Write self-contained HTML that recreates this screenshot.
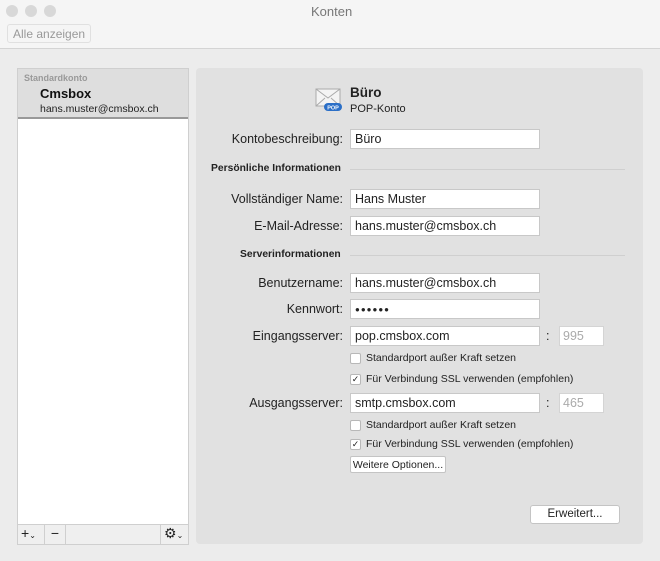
<!DOCTYPE html>
<html><head><meta charset="utf-8"><style>
*{box-sizing:border-box;margin:0;padding:0}
body{width:660px;height:561px;background:#ececec;font-family:"Liberation Sans",sans-serif;font-size:12.5px;color:#222;position:relative;overflow:hidden}
.a{position:absolute;white-space:nowrap}
.top{left:0;top:0;width:660px;height:49px;background:#f5f5f5;border-bottom:1px solid #d4d4d4}
.dot{width:12px;height:12px;border-radius:6px;background:#d8d8d8;top:5px}
.lbl{right:317px;text-align:right}
.in{left:350px;width:190px;height:20px;background:#fff;border:1px solid #c8c8c8;padding:2px 4px;font-size:12.5px}
.port{left:559px;width:45px;height:20px;background:#fff;border:1px solid #d4d4d4;color:#aaa;padding:2px 3px}
.cb{left:350px;width:11px;height:11px;background:#fff;border:1px solid #b8b8b8;border-radius:2px;font-size:9px;line-height:9px;text-align:center}
.ct{left:366px;font-size:10.5px}
.sec{font-weight:bold;font-size:10.3px}
.line{height:1px;background:#cfcfcf}
.btn{background:#fff;border:1px solid #c4c4c4;border-radius:3px;text-align:center;font-size:11.5px}
</style></head><body>
<div class="a top"></div>
<div class="a dot" style="left:6px"></div><div class="a dot" style="left:25px"></div><div class="a dot" style="left:44px"></div>
<div class="a" style="left:311px;top:4px;color:#777;font-size:13px">Konten</div>
<div class="a" style="left:7px;top:24px;width:84px;height:19px;border:1px solid #e0e0e0;border-radius:3px;color:#999;font-size:12px;padding:2px 5px">Alle anzeigen</div>

<div class="a" style="left:17px;top:68px;width:172px;height:477px;background:#fff;border:1px solid #cfcfcf"></div>
<div class="a" style="left:18px;top:69px;width:170px;height:50px;background:#dedede;border-bottom:2px solid #999"></div>
<div class="a" style="left:24px;top:73px;font-size:9px;font-weight:bold;color:#999">Standardkonto</div>
<div class="a" style="left:40px;top:86px;font-size:13px;font-weight:bold;color:#111">Cmsbox</div>
<div class="a" style="left:40px;top:103px;font-size:10.5px">hans.muster@cmsbox.ch</div>
<div class="a" style="left:18px;top:524px;width:170px;height:20px;background:#efefef;border-top:1px solid #cfcfcf"></div>
<div class="a" style="left:18px;top:524px;width:27px;height:20px;border-right:1px solid #cfcfcf;font-size:14px;padding:1px 3px">+<span style="font-size:8px">⌄</span></div>
<div class="a" style="left:45px;top:524px;width:21px;height:20px;border-right:1px solid #cfcfcf;text-align:center;font-size:14px;padding-top:1px">−</div>
<div class="a" style="left:160px;top:524px;width:28px;height:20px;border-left:1px solid #cfcfcf;font-size:14px;padding:1px 3px">⚙<span style="font-size:8px">⌄</span></div>

<div class="a" style="left:196px;top:68px;width:447px;height:476px;background:#e1e1e1;border-radius:4px"></div>
<svg class="a" style="left:314px;top:87px" width="30" height="26" viewBox="0 0 30 26"><rect x="2" y="2" width="24" height="17" fill="#f4f4f4" stroke="#aaa"/><path d="M2 2l12 9 12-9M2 19l9-8M26 19l-9-8" fill="none" stroke="#aaa"/><rect x="10" y="16" width="18" height="8" rx="4" fill="#2b6fc7"/><text x="19" y="22.5" font-size="5.5" fill="#fff" text-anchor="middle" font-family="Liberation Sans" font-weight="bold">POP</text></svg>
<div class="a" style="left:350px;top:85px;font-weight:bold;font-size:13.5px">Büro</div>
<div class="a" style="left:350px;top:103px;font-size:11px">POP-Konto</div>

<div class="a lbl" style="top:132px">Kontobeschreibung:</div><div class="a in" style="top:129px">Büro</div>
<div class="a sec" style="left:211px;top:163px">Persönliche Informationen</div><div class="a line" style="left:350px;top:169px;width:275px"></div>
<div class="a lbl" style="top:192px">Vollständiger Name:</div><div class="a in" style="top:189px">Hans Muster</div>
<div class="a lbl" style="top:219px">E-Mail-Adresse:</div><div class="a in" style="top:216px">hans.muster@cmsbox.ch</div>
<div class="a sec" style="left:240px;top:249px">Serverinformationen</div><div class="a line" style="left:350px;top:255px;width:275px"></div>
<div class="a lbl" style="top:276px">Benutzername:</div><div class="a in" style="top:273px">hans.muster@cmsbox.ch</div>
<div class="a lbl" style="top:302px">Kennwort:</div><div class="a in" style="top:299px;font-size:8px;padding-top:5px;letter-spacing:1px">●●●●●●</div>
<div class="a lbl" style="top:329px">Eingangsserver:</div><div class="a in" style="top:326px">pop.cmsbox.com</div>
<div class="a" style="left:546px;top:329px">:</div><div class="a port" style="top:326px">995</div>
<div class="a cb" style="top:353px"></div><div class="a ct" style="top:352px">Standardport außer Kraft setzen</div>
<div class="a cb" style="top:374px">✓</div><div class="a ct" style="top:373px">Für Verbindung SSL verwenden (empfohlen)</div>
<div class="a lbl" style="top:396px">Ausgangsserver:</div><div class="a in" style="top:393px">smtp.cmsbox.com</div>
<div class="a" style="left:546px;top:396px">:</div><div class="a port" style="top:393px">465</div>
<div class="a cb" style="top:420px"></div><div class="a ct" style="top:419px">Standardport außer Kraft setzen</div>
<div class="a cb" style="top:439px">✓</div><div class="a ct" style="top:438px">Für Verbindung SSL verwenden (empfohlen)</div>
<div class="a btn" style="left:350px;top:456px;width:96px;height:17px;border-radius:2px;font-size:10.5px;padding-top:2px">Weitere Optionen...</div>
<div class="a btn" style="left:530px;top:505px;width:90px;height:19px;padding-top:2px;font-size:11.5px">Erweitert...</div>
</body></html>
